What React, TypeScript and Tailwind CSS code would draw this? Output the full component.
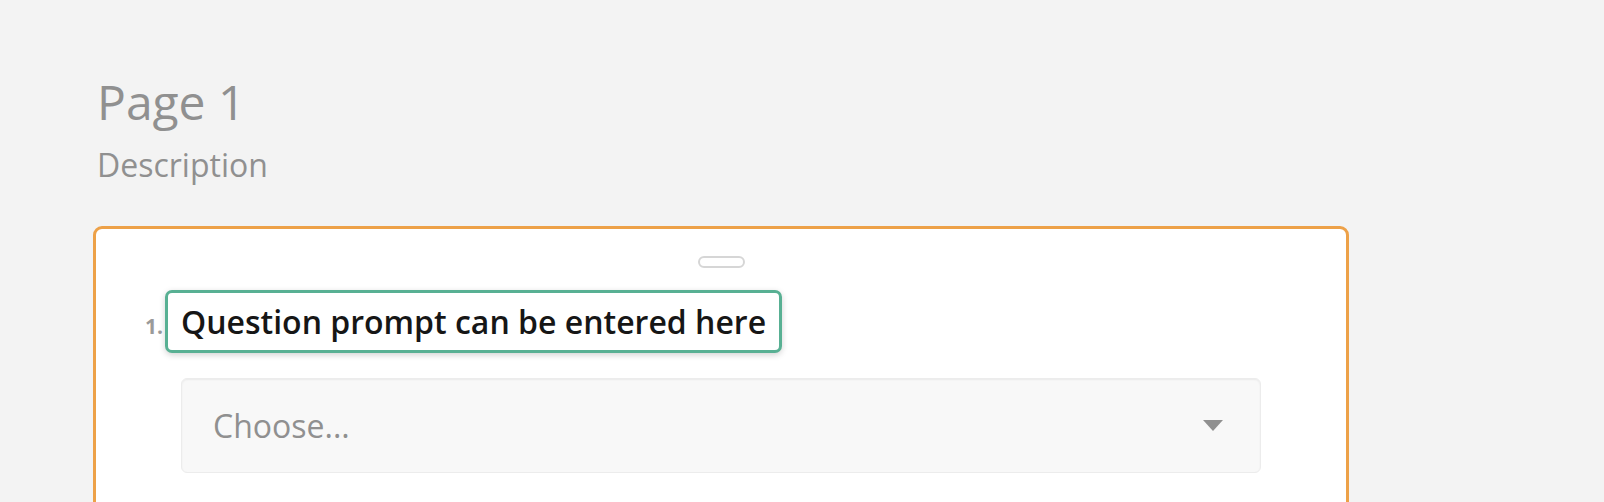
export default function App() {
  return (
    <div
      className="min-h-screen bg-[#f3f3f3] pt-[70px]"
      style={{ fontFamily: '"Open Sans", "Liberation Sans", sans-serif' }}
    >
      <div className="ml-[93px] w-[1256px]">
        <h1 className="pl-[4px] text-[48px] font-normal leading-[64px] text-[#909090]">Page 1</h1>
        <p className="mt-[11px] pl-[4px] text-[32px] leading-[40px] text-[#909090]">Description</p>

        <div className="mt-[41px] h-[300px] rounded-[9px] border-[3px] border-[#eda148] bg-white">
          <div className="flex justify-center pt-[27px]">
            <div className="h-[12px] w-[47px] rounded-full border-2 border-[#d6d6d6]" />
          </div>

          <div className="mt-[22px] flex items-baseline pl-[49px]">
            <span className="mr-[2px] text-[21px] font-bold text-[#9a9a9a]">1.</span>
            <div className="rounded-[7px] border-[3px] border-[#58b093] bg-white px-[13px] py-[9px] shadow-[0_2px_6px_rgba(0,0,0,0.18)]">
              <span className="text-[32px] font-semibold leading-[39px] text-[#161616]">
                Question prompt can be entered here
              </span>
            </div>
          </div>

          <div className="ml-[85px] mr-[85px] mt-[25px] flex h-[95px] items-center justify-between rounded-[6px] border border-[#ececec] bg-[#f8f8f8] pl-[31px] pr-[37px] shadow-[inset_0_1px_2px_rgba(0,0,0,0.06)]">
            <span className="text-[32px] text-[#909090]">Choose...</span>
            <svg width="20" height="11" viewBox="0 0 20 11">
              <path d="M0 0 L20 0 L10 11 Z" fill="#909090" />
            </svg>
          </div>
        </div>
      </div>
    </div>
  );
}
